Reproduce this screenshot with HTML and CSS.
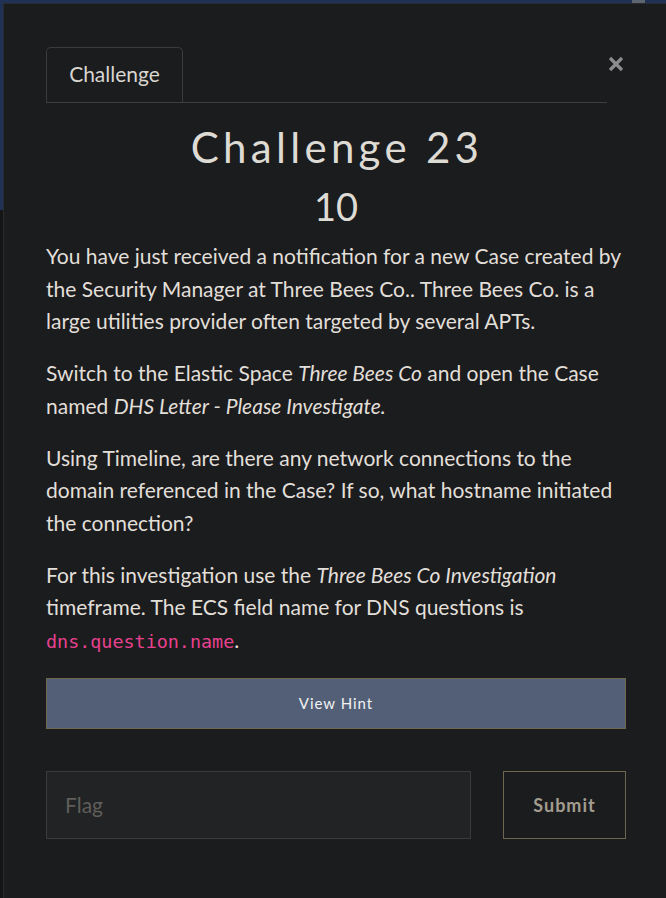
FILE: index.html
```html
<!DOCTYPE html>
<html lang="en">
<head>
<meta charset="utf-8">
<title>Challenge 23</title>
<link rel="stylesheet" href="styles.css">
</head>
<body>
<div class="page-header"><span class="scroll-thumb"></span></div>
<div class="modal">
  <div class="modal-head">
    <ul class="nav-tabs">
      <li class="tab">Challenge</li>
    </ul>
    <button class="close" aria-label="Close">
      <svg width="16" height="16" viewBox="0 0 16 16"><path d="M2 2 L14 14 M14 2 L2 14" stroke="#8d8d8d" stroke-width="3.2" stroke-linecap="butt"/></svg>
    </button>
  </div>
  <h2 class="title">Challenge 23</h2>
  <h3 class="value">10</h3>
  <div class="desc">
    <p>You have just received a notification for a new Case created by the Security Manager at Three Bees Co.. Three Bees Co. is a large utilities provider often targeted by several APTs.</p>
    <p>Switch to the Elastic Space <em>Three Bees Co</em> and open the Case named <em>DHS Letter - Please Investigate.</em></p>
    <p>Using Timeline, are there any network connections to the domain referenced in the Case? If so, what hostname initiated the connection?</p>
    <p>For this investigation use the <em>Three Bees Co Investigation</em> timeframe. The ECS field name for DNS questions is <code>dns.question.name</code>.</p>
  </div>
  <button class="hint-btn">View Hint</button>
  <form class="submit-row">
    <input class="flag-input" type="text" placeholder="Flag">
    <button class="submit-btn" type="button">Submit</button>
  </form>
</div>
</body>
</html>
```

FILE: styles.css
```css
html, body {
  margin: 0;
  padding: 0;
}
body {
  background: #141516;
  font-family: Lato, "Liberation Sans", sans-serif;
  overflow: hidden;
  height: 898px;
}
.page-header {
  height: 210px;
  background: #1f3154;
  position: relative;
}
.scroll-thumb {
  position: absolute;
  left: 632px;
  top: 0;
  width: 13px;
  height: 4px;
  background: #5d6570;
}
.modal {
  position: absolute;
  left: 3px;
  top: 3px;
  width: 664px;
  height: 920px;
  box-sizing: border-box;
  background: #1b1c1e;
  border: 1px solid #2a2b2e;
  padding: 43px 42px 0 42px;
  color: #e2dfd9;
}
.modal-head {
  display: flex;
  width: 580px;
  align-items: flex-start;
}
.nav-tabs {
  list-style: none;
  margin: 0;
  padding: 0;
  width: 561px;
  border-bottom: 1px solid #3e3f41;
  display: flex;
}
.tab {
  box-sizing: border-box;
  width: 137px;
  height: 55px;
  border: 1px solid #3a3b3d;
  border-bottom: none;
  border-radius: 5px 5px 0 0;
  font-size: 21px;
  color: #d9d6d0;
  display: flex;
  align-items: center;
  justify-content: center;
  padding-bottom: 3px;
  background: #1b1c1e;
}
.close {
  background: none;
  border: none;
  padding: 0;
  margin: 9px 0 0 1px;
  width: 18px;
  height: 16px;
  display: flex;
  cursor: pointer;
}
.title {
  margin: 19px 0 0 0;
  width: 580px;
  text-align: center;
  font-weight: 400;
  font-size: 42px;
  line-height: 50px;
  letter-spacing: 4.3px;
  text-indent: 2px;
  color: #dedbd5;
}
.value {
  margin: 12px 0 0 0;
  width: 580px;
  text-align: center;
  font-weight: 400;
  font-size: 38px;
  line-height: 44px;
  color: #dedbd5;
}
.desc {
  width: 580px;
  margin-top: 12px;
}
.desc p {
  margin: 0 0 19.5px 0;
  font-size: 21px;
  line-height: 32.5px;
}
.desc em {
  font-style: italic;
}
code {
  font-family: "DejaVu Sans Mono", "Liberation Mono", monospace;
  font-size: 18.4px;
  color: #e8418f;
}
.hint-btn {
  display: block;
  width: 580px;
  height: 51px;
  margin-top: 18px;
  background: #525f77;
  border: 1px solid #6e6650;
  color: #f2f2f2;
  font-family: Lato, "Liberation Sans", sans-serif;
  font-size: 15px;
  letter-spacing: 1px;
  cursor: pointer;
}
.submit-row {
  display: flex;
  width: 580px;
  margin-top: 42px;
  gap: 32px;
}
.flag-input {
  box-sizing: border-box;
  width: 425px;
  height: 68px;
  background: #222325;
  border: 1px solid #3a3b3c;
  color: #ddd;
  font-family: Lato, "Liberation Sans", sans-serif;
  font-size: 21px;
  padding: 0 18px;
  outline: none;
}
.flag-input::placeholder {
  color: #5f5e5a;
}
.submit-btn {
  box-sizing: border-box;
  width: 123px;
  height: 68px;
  background: #1b1c1e;
  border: 1px solid #6e6650;
  color: #a39d90;
  font-family: Lato, "Liberation Sans", sans-serif;
  font-weight: 700;
  font-size: 18px;
  letter-spacing: 1px;
  cursor: pointer;
}
```
